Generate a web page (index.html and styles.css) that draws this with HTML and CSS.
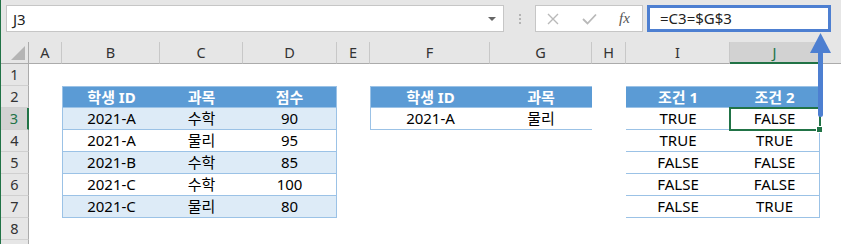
FILE: index.html
```html
<!DOCTYPE html>
<html>
<head>
    <link rel="stylesheet" href="styles.css">
</head>
<body>
<div class="window">
    <div class="topbar">
        <div class="namebox">
            <span>J3</span>
            <span class="drop"></span>
        </div>
        <div class="grip"><i></i><i></i><i></i></div>
        <div class="fxbox">
            <svg width="12" height="12" viewBox="0 0 12 12"><path d="M1 1 L11 11 M11 1 L1 11" stroke="#b9b9b9" stroke-width="1.4" fill="none"/></svg>
            <svg width="15" height="12" viewBox="0 0 15 12"><path d="M1 6 L5.5 10.5 L14 1.5" stroke="#b9b9b9" stroke-width="1.8" fill="none"/></svg>
            <span class="fx">fx</span>
        </div>
        <div class="formula">=C3=$G$3</div>
    </div>

    <div class="sheet">
        <!-- column headers -->
        <div class="ch corner"><span class="tri"></span></div>
        <div class="ch">A</div><div class="ch">B</div><div class="ch">C</div><div class="ch">D</div>
        <div class="ch">E</div><div class="ch">F</div><div class="ch">G</div><div class="ch">H</div>
        <div class="ch">I</div><div class="ch active">J</div><div class="ch last"></div>

        <!-- row 1 -->
        <div class="rh">1</div>
        <div></div><div></div><div></div><div></div><div></div><div></div><div></div><div></div><div></div><div></div><div></div>

        <!-- row 2 -->
        <div class="rh">2</div>
        <div></div>
        <div class="hd t1 left">학생 ID</div><div class="hd t1">과목</div><div class="hd t1 right">점수</div>
        <div></div>
        <div class="hd t2 left">학생 ID</div><div class="hd t2">과목</div>
        <div></div>
        <div class="hd t3">조건 1</div><div class="hd t3 right">조건 2</div>
        <div></div>

        <!-- row 3 -->
        <div class="rh active">3</div>
        <div></div>
        <div class="c t1 band left">2021-A</div><div class="c t1 band">수학</div><div class="c t1 band right">90</div>
        <div></div>
        <div class="c t2 left">2021-A</div><div class="c t2">물리</div>
        <div></div>
        <div class="c t3">TRUE</div><div class="c t3 right sel">FALSE</div>
        <div></div>

        <!-- row 4 -->
        <div class="rh">4</div>
        <div></div>
        <div class="c t1 left">2021-A</div><div class="c t1">물리</div><div class="c t1 right">95</div>
        <div></div><div></div><div></div><div></div>
        <div class="c t3">TRUE</div><div class="c t3 right">TRUE</div>
        <div></div>

        <!-- row 5 -->
        <div class="rh">5</div>
        <div></div>
        <div class="c t1 band left">2021-B</div><div class="c t1 band">수학</div><div class="c t1 band right">85</div>
        <div></div><div></div><div></div><div></div>
        <div class="c t3">FALSE</div><div class="c t3 right">FALSE</div>
        <div></div>

        <!-- row 6 -->
        <div class="rh">6</div>
        <div></div>
        <div class="c t1 left">2021-C</div><div class="c t1">수학</div><div class="c t1 right">100</div>
        <div></div><div></div><div></div><div></div>
        <div class="c t3">FALSE</div><div class="c t3 right">FALSE</div>
        <div></div>

        <!-- row 7 -->
        <div class="rh">7</div>
        <div></div>
        <div class="c t1 band left">2021-C</div><div class="c t1 band">물리</div><div class="c t1 band right">80</div>
        <div></div><div></div><div></div><div></div>
        <div class="c t3">FALSE</div><div class="c t3 right">TRUE</div>
        <div></div>

        <!-- row 8 -->
        <div class="rh">8</div>
        <div></div><div></div><div></div><div></div><div></div><div></div><div></div><div></div><div></div><div></div><div></div>

        <!-- row 9, only its top edge shows -->
        <div class="rh"></div>
        <div></div><div></div><div></div><div></div><div></div><div></div><div></div><div></div><div></div><div></div><div></div>
    </div>

    <svg class="arrow" width="26" height="90" viewBox="0 0 26 90">
        <path d="M12.5 3 L23 23 L2 23 Z" fill="#4d7fd1"/>
        <rect x="10" y="21" width="5" height="66" rx="2.5" fill="#4d7fd1"/>
    </svg>
</div>
</body>
</html>
```

FILE: styles.css
```css
body {
    margin: 0;
    background-color: #ffffff;
    font-family: "Noto Sans", "Noto Sans CJK KR", sans-serif;
}
.window {
    position: relative;
    width: 841px;
    height: 244px;
    overflow: hidden;
    border-left: 1px solid #217346;
    box-sizing: border-box;
}
.topbar {
    height: 42px;
    background-color: #e6e6e6;
    display: flex;
    align-items: flex-start;
    padding: 5px 0 0 5px;
    box-sizing: border-box;
}
.namebox {
    width: 498px;
    height: 27px;
    background-color: #ffffff;
    border: 1px solid #c6c6c6;
    box-sizing: border-box;
    display: flex;
    align-items: center;
    justify-content: space-between;
    padding: 0 7px 0 6px;
    font-size: 15px;
    color: #222;
}
.drop {
    width: 0;
    height: 0;
    border-left: 4px solid transparent;
    border-right: 4px solid transparent;
    border-top: 4px solid #666;
}
.grip {
    width: 31px;
    height: 27px;
    display: flex;
    flex-direction: column;
    align-items: center;
    justify-content: center;
    gap: 2px;
}
.grip i {
    width: 2px;
    height: 2px;
    background-color: #b4b4b4;
}
.fxbox {
    width: 108px;
    height: 27px;
    background-color: #ffffff;
    border: 1px solid #c6c6c6;
    box-sizing: border-box;
    display: flex;
    align-items: center;
    padding-left: 11px;
    gap: 23px;
}
.fx {
    font-family: "Liberation Serif", serif;
    font-style: italic;
    font-size: 15px;
    color: #555;
    margin-left: -1px;
}
.formula {
    width: 184px;
    height: 27px;
    margin-left: 4px;
    border: 3px solid #4d7fd1;
    background-color: #ffffff;
    box-sizing: border-box;
    padding-left: 10px;
    line-height: 20px;
    font-size: 15px;
    color: #222;
}
.sheet {
    display: grid;
    grid-template-columns: 28px 33px 98px 83px 94px 33px 120px 102px 34px 104px 90px 1fr;
    grid-auto-rows: 22px;
}
.sheet > div {
    box-sizing: border-box;
    text-align: center;
    font-size: 15px;
    line-height: 21px;
}
.ch {
    background-color: #e6e6e6;
    border-right: 1px solid #c8c8c8;
    border-bottom: 1px solid #ababab;
    font-size: 14.5px !important;
    color: #333;
}
.ch.active {
    background-color: #d2d2d2;
    border-bottom: 2px solid #217346;
    color: #217346;
}
.ch.last {
    border-right: none;
}
.corner {
    position: relative;
    border-right: 1px solid #ababab;
}
.tri {
    position: absolute;
    right: 3px;
    bottom: 3px;
    width: 0;
    height: 0;
    border-left: 14px solid transparent;
    border-bottom: 14px solid #b4b4b4;
}
.rh {
    background-color: #e6e6e6;
    border-right: 1px solid #ababab;
    border-bottom: 1px solid #d0d0d0;
    font-size: 14.5px !important;
    color: #333;
}
.rh.active {
    background-color: #d2d2d2;
    border-right: 2px solid #217346;
    color: #217346;
}
.hd {
    background-color: #5b9bd5;
    color: #ffffff;
    font-weight: bold;
    border-top: 1px solid #9bc2e6;
    border-bottom: 1px solid #9bc2e6;
    line-height: 20px !important;
}
.c {
    color: #000;
    border-bottom: 1px solid #9bc2e6;
}
.band {
    background-color: #ddebf7;
}
.left {
    border-left: 1px solid #9bc2e6;
}
.right {
    border-right: 1px solid #9bc2e6;
}
.t2.right {
    border-right: none;
}
.sel {
    position: relative;
    z-index: 1;
    outline: 2px solid #217346;
    outline-offset: -1px;
}
.sel::after {
    content: "";
    position: absolute;
    right: -4px;
    bottom: -4px;
    width: 5px;
    height: 5px;
    background-color: #217346;
    border: 1px solid #ffffff;
}
.arrow {
    position: absolute;
    left: 807px;
    top: 30px;
    z-index: 2;
}
```
